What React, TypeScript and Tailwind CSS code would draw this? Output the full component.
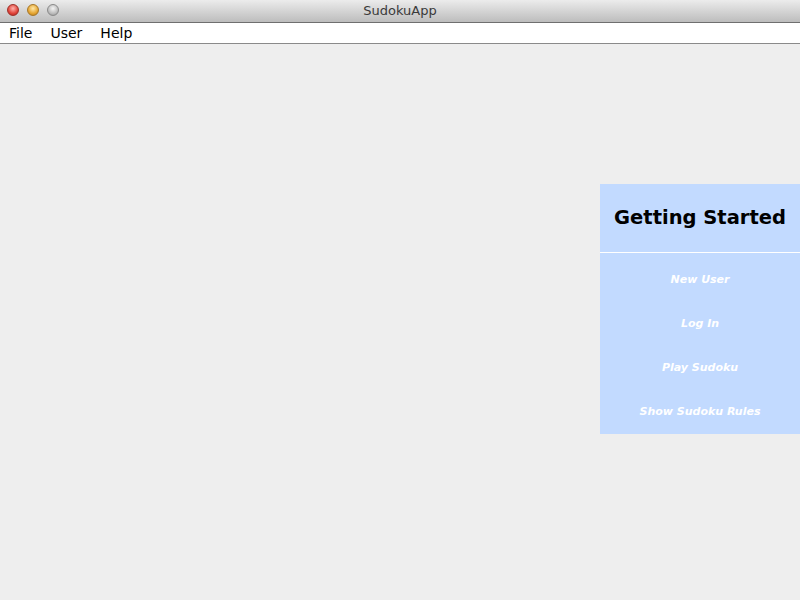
export default function App() {
  const items = ['New User', 'Log In', 'Play Sudoku', 'Show Sudoku Rules'];

  return (
    <div className="w-[800px] h-[600px] flex flex-col bg-[#eeeeee] overflow-hidden font-['DejaVu_Sans',sans-serif]">
      {/* Title bar */}
      <div className="relative h-[23px] shrink-0 bg-gradient-to-b from-[#ececec] to-[#bdbdbd] border-b border-[#6f6f6f] flex items-center justify-center">
        <div className="absolute left-[7px] top-[4px] flex gap-[8px]">
          <span className="w-[12px] h-[12px] rounded-full bg-[radial-gradient(circle_at_50%_35%,#ffb3ad,#e0443a_60%,#a8231c)] border border-[#9e2f28]" />
          <span className="w-[12px] h-[12px] rounded-full bg-[radial-gradient(circle_at_50%_35%,#ffe8a8,#e5a633_60%,#b0761c)] border border-[#a77726]" />
          <span className="w-[12px] h-[12px] rounded-full bg-[radial-gradient(circle_at_50%_35%,#f4f4f4,#bdbdbd_60%,#8e8e8e)] border border-[#8a8a8a]" />
        </div>
        <span className="text-[13px] text-[#3a3a3a]">SudokuApp</span>
      </div>

      {/* Menu bar */}
      <div className="h-[21px] shrink-0 bg-white border-b border-[#8a8a8a] flex items-center text-[14px] text-black">
        <span className="ml-[9px]">File</span>
        <span className="ml-[18px]">User</span>
        <span className="ml-[18px]">Help</span>
      </div>

      {/* Content */}
      <div className="flex-1 flex justify-end pt-[140px]">
        <div className="w-[200px] h-[250px] bg-[#c2daff] flex flex-col">
          <div className="h-[70px] flex items-center justify-center border-b border-white">
            <h1 className="text-[19.5px] font-bold text-black">Getting Started</h1>
          </div>
          <div className="flex flex-col pt-[5px]">
            {items.map((item) => (
              <div key={item} className="h-[44px] flex items-center justify-center text-[11px] font-bold italic text-white">
                {item}
              </div>
            ))}
          </div>
        </div>
      </div>
    </div>
  );
}
